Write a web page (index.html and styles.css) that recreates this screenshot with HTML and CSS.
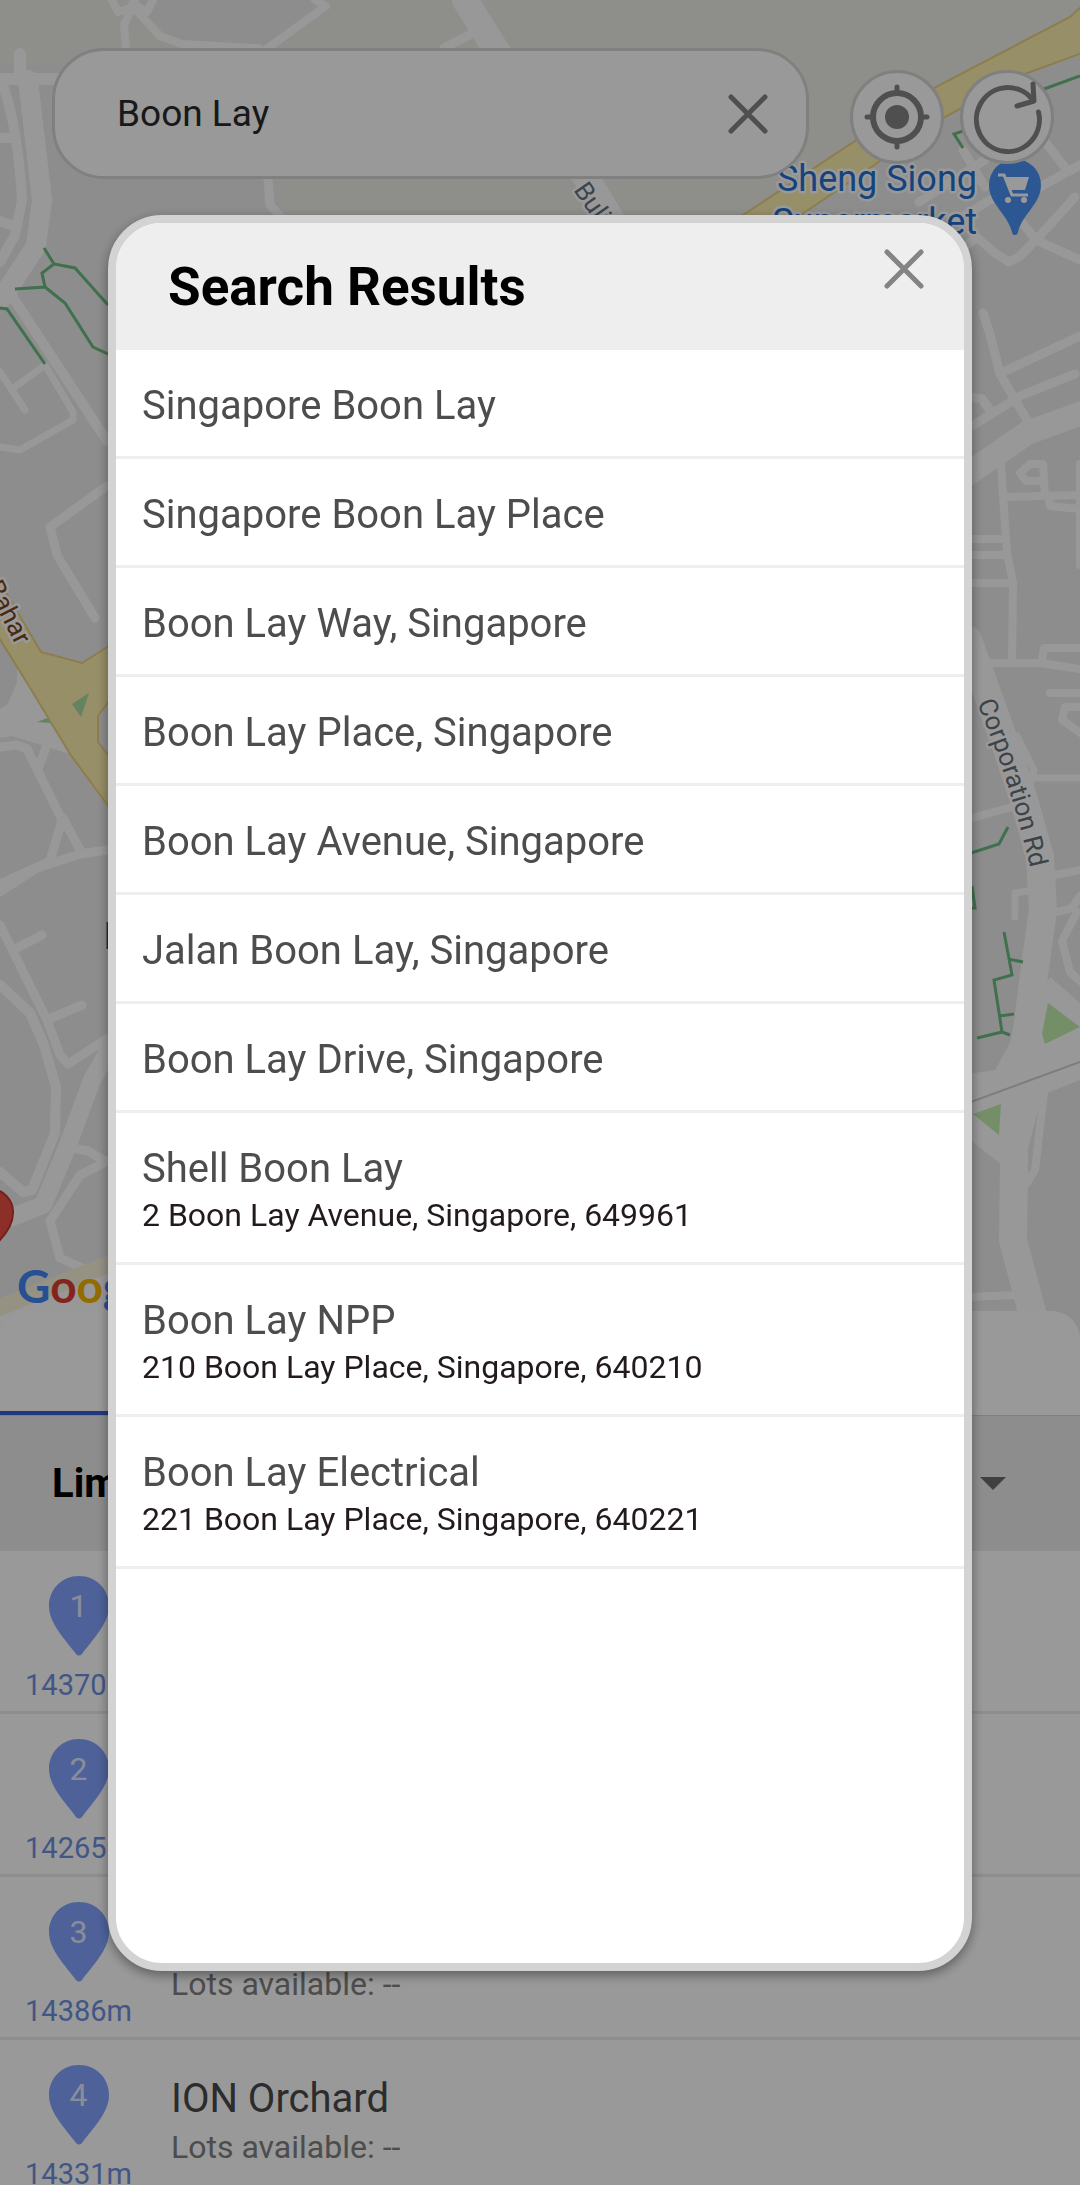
FILE: index.html
```html
<!DOCTYPE html>
<html lang="en">
<head>
<meta charset="utf-8">
<meta name="viewport" content="width=device-width, initial-scale=1">
<title>Search Results</title>
<link rel="stylesheet" href="styles.css">
</head>
<body>
<main class="app">
  <section class="map">
    <svg class="map-canvas" viewBox="0 0 1080 1339" preserveAspectRatio="xMidYMin slice" aria-hidden="true">
      <rect width="1080" height="1339" fill="#ebebeb"/>
      <path fill="#ededE6" d="M0 0H1080V20L934 90L740 216H286L262 179L126 48L60 66H0Z"/>
      <path fill="#ebebeb" d="M135 0H325L262 48L182 44L140 8Z"/>
      <g class="roads">
        <path d="M20 54V78M0 79H60" stroke-width="12"/>
        <path d="M28 80L42 200L36 246L2 298" stroke-width="20"/>
        <path d="M4 88Q18 130 22 200L15 235L0 262M0 138H10M0 221L16 227" stroke-width="10"/>
        <path d="M8 290L107 441" stroke-width="10"/>
        <path d="M0 372L25 410M15 387L45 365M45 365L73 412V420L20 450L0 447" stroke-width="7"/>
        <path d="M107 486L50 527L57 555L95 618" stroke-width="9"/>
        <path d="M112 0L118 12L130 8L135 0M134 8L160 36L182 44L258 48M130 12L124 25L126 48M153 0L147 12L137 6M315 0L326 6L265 50" stroke-width="8"/>
        <path d="M465 0L495 48L587 179L612 220" stroke-width="26"/>
        <path d="M475 32L444 48M268 179L270 205L282 218" stroke-width="9"/>
        <path d="M0 747L17 745L27 749L62 820L50 861L0 884M48 742L38 769M63 818L80 850M0 892L37 868L80 854L107 850" stroke-width="9"/>
        <path d="M0 925L47 1020L60 1055L68 1064L108 1038M13 950L42 935M47 1020L82 1005" stroke-width="9"/>
        <path d="M0 985L30 1013L44 1045L56 1087L55 1133L32 1190L23 1192L0 1172" stroke-width="10"/>
        <path d="M108 1052L92 1080L68 1145L43 1205L0 1222" stroke-width="18"/>
        <path d="M77 1149L88 1151L103 1160M110 1160L80 1175L50 1221L60 1258L100 1276" stroke-width="9"/>
        <path d="M963 150L985 187M919 202L985 160M1046 143L1067 170M1080 165L1040 187L990 200L965 215M1036 240L1075 197M1080 260L1036 240L1012 210M1036 240L1019 257L1009 262L995 253L977 237L967 245" stroke-width="9"/>
        <path d="M983 313L990 334L1000 374L1028 422M1003 372L1080 336M1075 374L1022 395L972 426M970 397L982 399L990 410" stroke-width="9"/>
        <path d="M965 476L1027 433L1085 412" stroke-width="24"/>
        <path d="M1000 450L1005 525L1007 552L1013 583L1012 663M1045 495L1043 464H1030L1020 473L1026 481H1042M1048 495L1050 506L1080 509M972 555H1007M972 583H1013" stroke-width="8"/>
        <path d="M1005 497L1080 495M972 539H1003M965 663H1040L1080 669M1042 661L1044 648H1080M1050 693H1085M1085 707H1065L1062 720L1085 736M1080 464V565" stroke-width="8"/>
        <path d="M1017 736L1034 770L1030 785M1034 778H1080M1027 891L1015 893V917" stroke-width="7"/>
        <path d="M968 640L1004 740L1024 800L1040 857L1043 910L1035 967L1027 1030L1015 1087L1013 1240L1034 1320" stroke-width="28"/>
        <path d="M968 819L1012 807M1050 876L1085 869M1057 912L1072 908L1080 896M1077 912L1062 941L1070 972L1085 986M968 1297L1018 1295M1044 1092L1035 1170L1027 1183" stroke-width="8"/>
      </g>
      <path fill="#fefefe" d="M17 664V682L8 704L0 709V738L12 736L70 754ZM968 1074L995 1070L1010 1043L1050 977L1080 1003V1080L1042 1095L1020 1180L998 1162L968 1138Z"/>
      <path fill="none" stroke="#d0d0d0" stroke-width="2" d="M968 1103L1080 1062"/>
      <path fill="#c2eeae" d="M1048 1003L1080 1027L1045 1044L1042 1034ZM973 1114L1001 1104L999 1135Z"/>
      <path class="highway" d="M740 217L855 141L934 88L1070 17L1082 6V53L1022 75L943 118L798 217Z"/>
      <path class="highway" d="M-2 579L41 652L82 663L112 644V697L98 716V742L112 760V811L70 754L32 691L-2 636Z"/>
      <path fill="#a9dba0" d="M72 704L89 693L81 717ZM37 722L47 718L51 723Z"/>
      <path fill="#fefefe" d="M0 1306L112 1262V1339H0Z"/>
      <path fill="none" stroke="#f8f3dd" stroke-width="17" d="M-4 1309L112 1263"/>
      <g class="trails">
        <path d="M44 248L54 264L75 268L108 305M54 264L42 273L45 287L15 289M45 287L65 303L93 347L108 354"/>
        <path d="M0 308L7 309L45 364M1044 89L1080 76M963 131L954 134L963 148"/>
        <path d="M968 854L999 844L1008 827M972 886L975 908H968M1004 932L1012 975L994 980L1002 1032L977 1038M1008 959L1023 962M1000 1016L1014 1014M1002 1032L1010 1035"/>
      </g>
      <path fill="#4b91f5" d="M1015 159a26 26 0 0 1 26 26c0 19-18 28-23 47a3 3 0 0 1-6 0c-5-19-23-28-23-47a26 26 0 0 1 26-26z"/>
      <path fill="none" stroke="#fff" stroke-width="3" d="M998 175h6l8 20h16"/>
      <path fill="#fff" d="M1005 177h24l-4 13h-15z"/>
      <circle cx="1008" cy="200" r="3" fill="#fff"/><circle cx="1024" cy="200" r="3" fill="#fff"/>
      <path fill="#ea4f43" stroke="#c5352b" stroke-width="2" d="M-10 1189a23 23 0 0 1 23 24c0 12-8 22-15 29h-8z"/>
      <path stroke="#3f4e55" stroke-width="3" d="M108 922v27"/>
      <g class="labels">
        <text x="977" y="191" text-anchor="end" class="place">Sheng Siong</text>
        <text x="977" y="234" text-anchor="end" class="place">Supermarket</text>
        <text transform="translate(573 190) rotate(55)" class="street">Bulim</text>
        <text transform="translate(16 646) rotate(63)" text-anchor="end" class="street main-road">Bahar</text>
        <path id="corp" fill="none" stroke="none" d="M977 703Q1012 785 1032 876"/>
        <text class="street"><textPath href="#corp">Corporation Rd</textPath></text>
      </g>
      <text x="17" y="1303" class="brand"><tspan fill="#4285f4">G</tspan><tspan fill="#db3f32">o</tspan><tspan fill="#f4b400">o</tspan><tspan fill="#4285f4">g</tspan><tspan fill="#0f9d58">l</tspan><tspan fill="#db3f32">e</tspan></text>
    </svg>
    <form class="toolbar">
      <div class="search">
        <input class="search-input" type="text" value="Boon Lay" aria-label="Search location">
        <button class="icon-button" type="button" aria-label="Clear search">
          <svg width="40" height="40" viewBox="0 0 40 40"><path class="cross" d="M3 3L37 37M37 3L3 37"/></svg>
        </button>
      </div>
      <div class="map-actions">
        <button class="round-button" type="button" aria-label="My location">
          <svg width="88" height="88" viewBox="0 0 88 88"><g fill="none" stroke="#848484" stroke-width="6" stroke-linecap="round"><circle cx="44" cy="44" r="24"/><path stroke-width="5" d="M44 14V20M44 68V74M14 44H20M68 44H74"/></g><circle cx="44" cy="44" r="12" fill="#848484"/></svg>
        </button>
        <button class="round-button" type="button" aria-label="Refresh">
          <svg width="88" height="88" viewBox="0 0 88 88"><path fill="none" stroke="#848484" stroke-width="5" stroke-linecap="round" stroke-linejoin="round" d="M75.500 39A31.500 32 0 1 1 69 26M70 11L71 28L54 33"/></svg>
        </button>
      </div>
    </form>
  </section>

  <section class="sheet">
    <div class="tabs"><span class="tab-active"></span></div>
    <div class="filter">
      <label for="limit">Limit</label>
      <select id="limit" class="filter-select"><option></option></select>
      <svg width="26" height="13" viewBox="0 0 26 13" aria-hidden="true"><path fill="#6b6b6b" d="M0 0H26L13 13Z"/></svg>
    </div>
    <ol class="carparks">
      <li class="carpark">
        <div class="marker"><span class="pin"><svg class="pin-shape" viewBox="0 0 60 80"><path d="M30 0C47 0 60 13 60 30C60 48 43 64 33 78Q30 81 27 78C17 64 0 48 0 30C0 13 13 0 30 0Z"/></svg><b>1</b></span><span>14370m</span></div>
      </li>
      <li class="carpark">
        <div class="marker"><span class="pin"><svg class="pin-shape" viewBox="0 0 60 80"><path d="M30 0C47 0 60 13 60 30C60 48 43 64 33 78Q30 81 27 78C17 64 0 48 0 30C0 13 13 0 30 0Z"/></svg><b>2</b></span><span>14265m</span></div>
      </li>
      <li class="carpark">
        <div class="marker"><span class="pin"><svg class="pin-shape" viewBox="0 0 60 80"><path d="M30 0C47 0 60 13 60 30C60 48 43 64 33 78Q30 81 27 78C17 64 0 48 0 30C0 13 13 0 30 0Z"/></svg><b>3</b></span><span>14386m</span></div>
        <div class="details"><span class="name">&nbsp;</span><span class="lots">Lots available: --</span></div>
      </li>
      <li class="carpark">
        <div class="marker"><span class="pin"><svg class="pin-shape" viewBox="0 0 60 80"><path d="M30 0C47 0 60 13 60 30C60 48 43 64 33 78Q30 81 27 78C17 64 0 48 0 30C0 13 13 0 30 0Z"/></svg><b>4</b></span><span>14331m</span></div>
        <div class="details"><span class="name">ION Orchard</span><span class="lots">Lots available: --</span></div>
      </li>
    </ol>
  </section>
</main>

<div class="scrim">
  <section class="dialog" role="dialog" aria-modal="true" aria-labelledby="dialog-title">
    <header class="dialog-header">
      <h1 id="dialog-title">Search Results</h1>
      <button class="icon-button" type="button" aria-label="Close">
        <svg width="40" height="40" viewBox="0 0 40 40"><path class="cross" d="M3 3L37 37M37 3L3 37"/></svg>
      </button>
    </header>
    <ul class="results">
      <li><a href="#">Singapore Boon Lay</a></li>
      <li><a href="#">Singapore Boon Lay Place</a></li>
      <li><a href="#">Boon Lay Way, Singapore</a></li>
      <li><a href="#">Boon Lay Place, Singapore</a></li>
      <li><a href="#">Boon Lay Avenue, Singapore</a></li>
      <li><a href="#">Jalan Boon Lay, Singapore</a></li>
      <li><a href="#">Boon Lay Drive, Singapore</a></li>
      <li><a href="#">Shell Boon Lay<small>2 Boon Lay Avenue, Singapore, 649961</small></a></li>
      <li><a href="#">Boon Lay NPP<small>210 Boon Lay Place, Singapore, 640210</small></a></li>
      <li><a href="#">Boon Lay Electrical<small>221 Boon Lay Place, Singapore, 640221</small></a></li>
    </ul>
  </section>
</div>
</body>
</html>
```
FILE: styles.css
```css
* { box-sizing: border-box; }

body {
  margin: 0;
  font-family: Roboto, sans-serif;
  color: #2a2a2a;
  background: #fff;
}

button, input, select { font: inherit; color: inherit; }
button { padding: 0; border: 0; background: none; cursor: pointer; }
svg { display: block; }
ul, ol { margin: 0; padding: 0; list-style: none; }

.app {
  display: flex;
  flex-direction: column;
  height: 100vh;
  overflow: hidden;
}

/* Map */
.map {
  position: relative;
  flex: none;
  height: calc(60vh + 28px);
}
.map-canvas {
  position: absolute;
  inset: 0;
  width: 100%;
  height: 100%;
}
.roads path {
  fill: none;
  stroke: #fefefe;
  stroke-linecap: round;
  stroke-linejoin: round;
}
.highway { fill: #faeead; stroke: #ecd182; stroke-width: 2; }
.trails path { fill: none; stroke: #6bbb80; stroke-width: 3; }
.labels text { paint-order: stroke; stroke: #fff; stroke-width: 5; stroke-linejoin: round; }
.place { font-size: 36px; fill: #2670d0; }
.street { font-size: 26px; fill: #66727a; }
.main-road { fill: #7a4519; }
.brand { font-family: Lato, sans-serif; font-size: 46px; font-weight: 700; }

.toolbar {
  position: relative;
  display: flex;
  align-items: center;
  gap: 41px;
  padding: 48px 26px 0 52px;
}
.search {
  flex: 1;
  display: flex;
  align-items: center;
  height: 131px;
  padding: 0 38px 0 62px;
  border: 3px solid #d5d5d5;
  border-radius: 52px;
  background: #fff;
}
.search-input {
  flex: 1;
  min-width: 0;
  padding: 0;
  border: 0;
  outline: 0;
  background: none;
  font-size: 37px;
}
.map-actions { display: flex; gap: 16px; padding-top: 6px; }
.round-button {
  border: 3px solid #d5d5d5;
  border-radius: 50%;
  background: #fff;
}
.cross { fill: none; stroke: #848484; stroke-width: 5; stroke-linecap: round; }

/* Bottom sheet */
.sheet {
  position: relative;
  flex: none;
  margin-top: -28px;
  border-radius: 28px 28px 0 0;
  background: #fff;
}
.tabs { display: flex; height: 105px; border-bottom: 1px solid #d5d5d5; }
.tab-active { width: 50%; border-bottom: 4px solid #3b5fd0; }
.filter {
  display: flex;
  align-items: center;
  height: 135px;
  padding: 0 74px 0 52px;
  background: #ebebeb;
  font-size: 40px;
  font-weight: 700;
  color: #000;
}
.filter-select { flex: 1; appearance: none; border: 0; background: none; }

.carpark {
  display: flex;
  height: 163px;
  padding-top: 25px;
  border-bottom: 3px solid #ebebeb;
}
.marker {
  display: flex;
  flex-direction: column;
  align-items: center;
  gap: 12px;
  width: 157px;
  margin-right: 14px;
  font-size: 29px;
  line-height: 34px;
  color: #6f90e0;
}
.pin { display: grid; justify-items: center; width: 60px; height: 80px; }
.pin > * { grid-area: 1 / 1; }
.pin b { padding-top: 13px; font-size: 32px; font-weight: 400; color: #fff; opacity: 0.8; }
.pin-shape { width: 60px; height: 80px; fill: #82a3ff; }
.details { display: flex; flex-direction: column; padding-top: 8px; }
.name { font-size: 40px; line-height: 52px; color: #4a4a4a; }
.lots { font-size: 32px; line-height: 44px; color: #808080; }

/* Dialog */
.scrim {
  position: fixed;
  inset: 0;
  display: flex;
  padding: 215px 10% 214px;
  background: rgba(0, 0, 0, 0.4);
}
.dialog {
  flex: 1;
  overflow: hidden;
  border: 8px solid #d3d3d3;
  border-radius: 54px;
  background: #fff;
  box-shadow: 0 4px 12px rgba(0, 0, 0, 0.4);
}
.dialog-header {
  display: flex;
  justify-content: space-between;
  align-items: flex-start;
  padding: 26px 40px 29px 52px;
  background: #eee;
}
.dialog-header h1 {
  margin: 0;
  padding-top: 4px;
  font-size: 53px;
  line-height: 68px;
  font-weight: 700;
  color: #000;
}
.results li { border-bottom: 3px solid #eee; }
.results a {
  display: block;
  padding: 31px 26px 26px;
  font-size: 40px;
  line-height: 49px;
  color: #4d4d4d;
  text-decoration: none;
}
.results small {
  display: block;
  padding-top: 1px;
  font-size: 32px;
  line-height: 42px;
  color: #231a1c;
}
```
